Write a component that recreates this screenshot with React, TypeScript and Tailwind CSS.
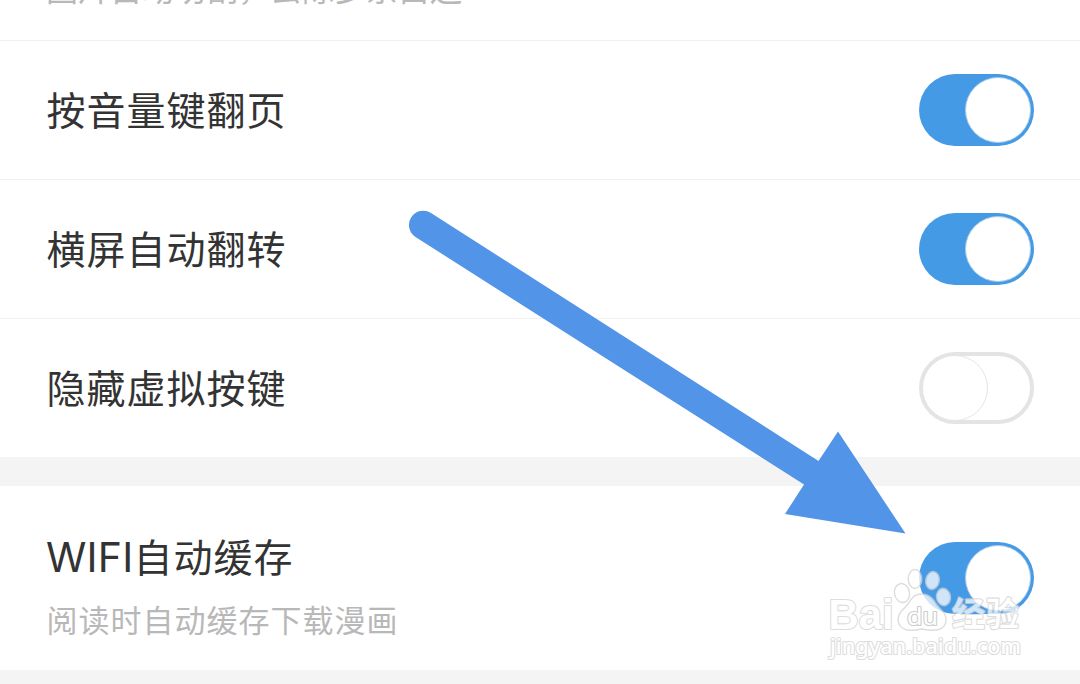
function Toggle({ on = false }: { on?: boolean }) {
  return on ? (
    <span role="switch" aria-checked="true" className="flex h-[72px] w-[115px] shrink-0 items-center justify-end rounded-full bg-[#459ae6] pr-[3px]">
      <span className="size-[66px] rounded-full border border-[#a9c9e6] bg-white" />
    </span>
  ) : (
    <span role="switch" aria-checked="false" className="flex h-[72px] w-[115px] shrink-0 items-center overflow-hidden rounded-full border-4 border-[#e4e4e4] bg-white">
      <span className="-ml-px size-[66px] shrink-0 rounded-full border border-[#e4e4e4] bg-white" />
    </span>
  );
}

function Row({ title, on }: { title: string; on?: boolean }) {
  return (
    <div className="flex h-[139px] items-center justify-between border-b border-[#f2f2f2] px-[46px] last:h-[138px] last:border-b-0">
      <span className="pb-[5px] pl-[0.5px] text-[39px] leading-[60px] tracking-[1px] text-[#333]">{title}</span>
      <Toggle on={on} />
    </div>
  );
}

function Arrow() {
  return (
    <svg className="pointer-events-none absolute inset-0" width="1080" height="684" fill="#5294e8" aria-hidden="true">
      <path d="M431 213 L818.5 461 L838 431.5 L905.5 533.5 L785 514 L804 484.500 L415.500 237 A14 14 0 0 1 431 213Z" />
    </svg>
  );
}

function Watermark() {
  return (
    <svg
      className="pointer-events-none absolute top-[560px] left-[820px] opacity-75"
      width="215"
      height="110"
      viewBox="820 560 215 110"
      aria-hidden="true"
    >
      <g fill="#fff" stroke="#d2d2d2" strokeWidth="1.4" strokeLinejoin="round">
        <ellipse cx="902" cy="593" rx="7.500" ry="9.500" transform="rotate(-12 902 593)" />
        <ellipse cx="915" cy="579" rx="6.800" ry="9.500" />
        <ellipse cx="932.500" cy="580.500" rx="6.800" ry="9" transform="rotate(10 932.5 580.5)" />
        <ellipse cx="943.500" cy="597" rx="7" ry="8.800" transform="rotate(-8 943.5 597)" />
        <path d="M922 594 C930 594 934 600 937 605 C942 611 947 614 946 621 C945 630 936 632 922 629 C908 632 899 630 898 620 C898 613 903 610 908 604 C911 599 914 594 922 594Z" />
        <g strokeWidth="2.2" paintOrder="stroke">
          <text x="828.5" y="628.5" fontSize="43" textLength="65" lengthAdjust="spacingAndGlyphs" fontFamily="Liberation Sans, sans-serif" fontWeight="700">Bai</text>
          <text x="907" y="624.5" fontSize="24" textLength="31" lengthAdjust="spacingAndGlyphs" fontFamily="Noto Sans, sans-serif" stroke="#bdbdbd">du</text>
          <text x="952" y="626" fontSize="33" textLength="67" fontFamily="Noto Sans CJK SC, sans-serif" fontWeight="700">经验</text>
          <text x="830" y="654" fontSize="22" textLength="191" lengthAdjust="spacingAndGlyphs" fontFamily="Noto Sans, sans-serif" fontWeight="500">jingyan.baidu.com</text>
        </g>
      </g>
    </svg>
  );
}

export default function App() {
  return (
    <main className="relative flex h-[684px] w-[1080px] flex-col overflow-hidden bg-[#f4f4f4] font-['Noto_Sans_CJK_SC',sans-serif]">
      <section className="bg-white">
        <div className="flex h-[41px] items-end overflow-hidden border-b border-[#f2f2f2] pb-[29px] pl-[46px]">
          <span className="text-[32px] leading-[48px] text-[#b8b8b8]">图片自动切割，去除多余白边</span>
        </div>
        <Row title="按音量键翻页" on />
        <Row title="横屏自动翻转" on />
        <Row title="隐藏虚拟按键" />
      </section>
      <section className="mt-[29px] flex h-[184px] items-center justify-between bg-white px-[46px]">
        <div className="flex flex-col pt-4">
          <h2 className="text-[39px] leading-[64px] tracking-[1px] text-[#333]">
            <span className="font-[Inter] text-[41px] tracking-[0.2px]">WIFI</span>自动缓存
          </h2>
          <p className="pl-[0.5px] text-[31px] leading-[60px] tracking-[1px] text-[#b8b8b8]">阅读时自动缓存下载漫画</p>
        </div>
        <Toggle on />
      </section>
      <Arrow />
      <Watermark />
    </main>
  );
}
